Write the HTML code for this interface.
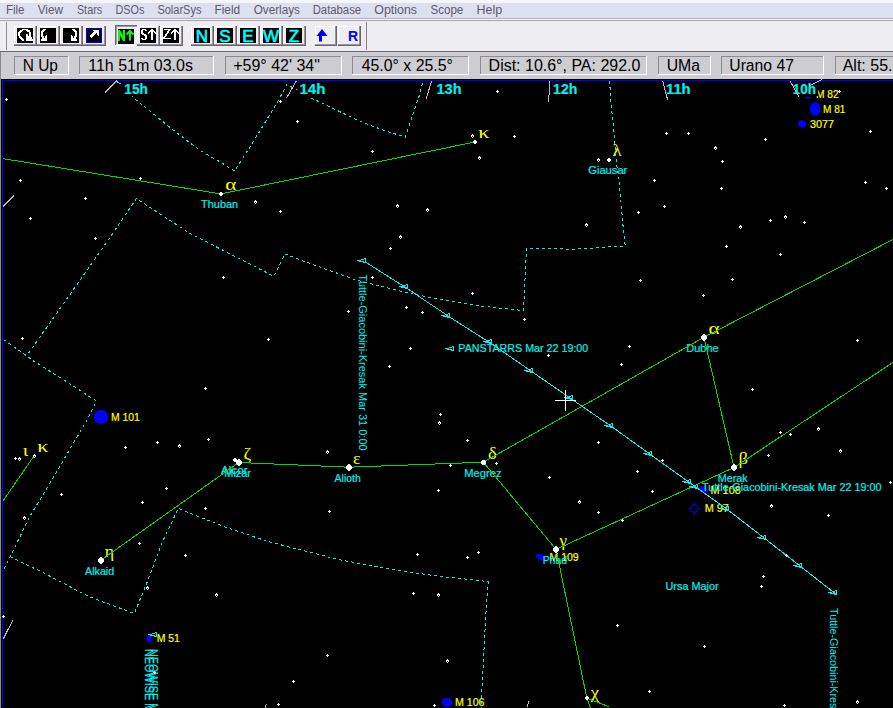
<!DOCTYPE html><html><head><meta charset="utf-8"><style>html,body{margin:0;padding:0;background:#000;overflow:hidden}svg{display:block}</style></head><body><svg width="893" height="708" viewBox="0 0 893 708" font-family="Liberation Sans, sans-serif"><rect x="0" y="0" width="893" height="79" fill="#d0d0d4"/><rect x="0" y="0" width="893" height="3" fill="#f6f6fa"/><rect x="0" y="3" width="893" height="15" fill="#dde0f0"/><rect x="0" y="18" width="893" height="1" fill="#b8acb8"/><rect x="0" y="19" width="893" height="1" fill="#fafafa"/><rect x="0" y="20" width="893" height="1" fill="#a8a0a8"/><rect x="0" y="21" width="893" height="30" fill="#eeeef2"/><rect x="0" y="51" width="893" height="1" fill="#6c646c"/><rect x="0" y="52" width="893" height="27" fill="#cdccd2"/><rect x="0" y="52" width="1" height="27" fill="#8a8a8a"/><text x="5.9" y="13.8" fill="#62586a" font-size="12" textLength="18.6" lengthAdjust="spacingAndGlyphs" >File</text><text x="37.7" y="13.8" fill="#62586a" font-size="12" textLength="25.3" lengthAdjust="spacingAndGlyphs" >View</text><text x="76.9" y="13.8" fill="#62586a" font-size="12" textLength="25.3" lengthAdjust="spacingAndGlyphs" >Stars</text><text x="115.5" y="13.8" fill="#62586a" font-size="12" textLength="28.8" lengthAdjust="spacingAndGlyphs" >DSOs</text><text x="157.4" y="13.8" fill="#62586a" font-size="12" textLength="44.0" lengthAdjust="spacingAndGlyphs" >SolarSys</text><text x="214.5" y="13.8" fill="#62586a" font-size="12" textLength="25.7" lengthAdjust="spacingAndGlyphs" >Field</text><text x="253.7" y="13.8" fill="#62586a" font-size="12" textLength="46.3" lengthAdjust="spacingAndGlyphs" >Overlays</text><text x="312.7" y="13.8" fill="#62586a" font-size="12" textLength="48.4" lengthAdjust="spacingAndGlyphs" >Database</text><text x="374.3" y="13.8" fill="#62586a" font-size="12" textLength="42.7" lengthAdjust="spacingAndGlyphs" >Options</text><text x="430.5" y="13.8" fill="#62586a" font-size="12" textLength="32.8" lengthAdjust="spacingAndGlyphs" >Scope</text><text x="476.6" y="13.8" fill="#62586a" font-size="12" textLength="25.6" lengthAdjust="spacingAndGlyphs" >Help</text><rect x="6" y="22" width="1" height="28" fill="#8a908a"/><rect x="366" y="22" width="1" height="28" fill="#8a808a"/><rect x="14" y="26" width="22" height="1" fill="#ffffff"/><rect x="14" y="26" width="1" height="19" fill="#ffffff"/><rect x="14" y="44" width="22" height="1" fill="#9c949c"/><rect x="35" y="26" width="1" height="19" fill="#9c949c"/><rect x="14" y="45" width="23" height="1" fill="#6c646c"/><rect x="36" y="26" width="1" height="20" fill="#6c646c"/><rect x="17" y="28" width="16" height="15" fill="#000"/><path d="M22 29h6v1h-6zM20 30h3v1h-3zM26 30h4v1h-4zM19 31h3v1h-3zM27 31h3v1h-3zM18 32h3v1h-3zM29 32h2v1h-2zM18 33h2v1h-2zM29 33h2v1h-2zM18 34h2v1h-2zM26 34h2v1h-2zM29 34h2v1h-2zM18 35h2v1h-2zM26 35h2v1h-2zM29 35h2v1h-2zM19 36h2v1h-2zM26 36h5v1h-5zM19 37h3v1h-3zM26 37h6v1h-6zM20 38h3v1h-3zM26 38h6v1h-6zM21 39h3v1h-3zM26 39h7v1h-7zM22 40h2v1h-2zM26 40h7v1h-7z" fill="#fff"/><rect x="37" y="26" width="22" height="1" fill="#ffffff"/><rect x="37" y="26" width="1" height="19" fill="#ffffff"/><rect x="37" y="44" width="22" height="1" fill="#9c949c"/><rect x="58" y="26" width="1" height="19" fill="#9c949c"/><rect x="37" y="45" width="23" height="1" fill="#6c646c"/><rect x="59" y="26" width="1" height="20" fill="#6c646c"/><rect x="40" y="28" width="16" height="15" fill="#000"/><path d="M43 29h3v1h-3zM42 30h3v1h-3zM41 31h3v1h-3zM41 32h2v1h-2zM41 33h2v1h-2zM41 34h2v1h-2zM41 35h2v1h-2zM46 35h1v1h-1zM41 36h3v1h-3zM45 36h2v1h-2zM42 37h2v1h-2zM45 37h2v1h-2zM42 38h5v1h-5zM41 39h6v1h-6zM41 40h6v1h-6z" fill="#fff"/><rect x="60" y="26" width="22" height="1" fill="#ffffff"/><rect x="60" y="26" width="1" height="19" fill="#ffffff"/><rect x="60" y="44" width="22" height="1" fill="#9c949c"/><rect x="81" y="26" width="1" height="19" fill="#9c949c"/><rect x="60" y="45" width="23" height="1" fill="#6c646c"/><rect x="82" y="26" width="1" height="20" fill="#6c646c"/><rect x="63" y="28" width="16" height="15" fill="#000"/><path d="M72 29h3v1h-3zM73 30h3v1h-3zM74 31h3v1h-3zM75 32h2v1h-2zM75 33h2v1h-2zM75 34h2v1h-2zM71 35h1v1h-1zM75 35h2v1h-2zM71 36h2v1h-2zM74 36h3v1h-3zM71 37h2v1h-2zM74 37h2v1h-2zM71 38h5v1h-5zM71 39h6v1h-6zM71 40h6v1h-6z" fill="#fff"/><rect x="83" y="26" width="22" height="1" fill="#ffffff"/><rect x="83" y="26" width="1" height="19" fill="#ffffff"/><rect x="83" y="44" width="22" height="1" fill="#9c949c"/><rect x="104" y="26" width="1" height="19" fill="#9c949c"/><rect x="83" y="45" width="23" height="1" fill="#6c646c"/><rect x="105" y="26" width="1" height="20" fill="#6c646c"/><rect x="86" y="28" width="16" height="15" fill="#000"/><rect x="86.5" y="28.5" width="15" height="14" fill="none" stroke="#0000ff"/><path d="M93 30h6v1h-6zM94 31h5v1h-5zM93 32h6v1h-6zM92 33h4v1h-4zM97 33h2v1h-2zM91 34h4v1h-4zM97 34h2v1h-2zM90 35h4v1h-4zM98 35h1v1h-1zM90 36h3v1h-3zM91 37h1v1h-1z" fill="#fff"/><rect x="115" y="25" width="23" height="1" fill="#6c646c"/><rect x="115" y="25" width="1" height="20" fill="#6c646c"/><rect x="116" y="26" width="21" height="1" fill="#a09aa0"/><rect x="116" y="26" width="1" height="18" fill="#a09aa0"/><rect x="115" y="45" width="23" height="1" fill="#ffffff"/><rect x="137" y="25" width="1" height="21" fill="#ffffff"/><rect x="118" y="29" width="16" height="15" fill="#000"/><g transform="translate(118,29)" fill="#00ff00"><path d="M0 1h2v11h-2zM5 1h2v11h-2zM0 1h2l5 9v2h-2l-5-9z"/><path d="M11 1.5h2v10h-2z"/><path d="M8.5 5.5L12 2L15.5 5.5" stroke="#00ff00" stroke-width="2" fill="none"/></g><rect x="137" y="26" width="22" height="1" fill="#ffffff"/><rect x="137" y="26" width="1" height="19" fill="#ffffff"/><rect x="137" y="44" width="22" height="1" fill="#9c949c"/><rect x="158" y="26" width="1" height="19" fill="#9c949c"/><rect x="137" y="45" width="23" height="1" fill="#6c646c"/><rect x="159" y="26" width="1" height="20" fill="#6c646c"/><rect x="140" y="28" width="16" height="15" fill="#000"/><path fill="#fff" d="M142 29h4v1h-4zM141 30h2v1h-2zM145 30h2v1h-2zM141 31h2v1h-2zM141 32h2v1h-2zM141 33h3v1h-3zM142 34h4v1h-4zM144 35h3v1h-3zM145 36h2v1h-2zM145 37h2v1h-2zM141 38h2v1h-2zM145 38h2v1h-2zM142 39h4v1h-4zM151 29h2v1h-2zM150 30h4v1h-4zM149 31h6v1h-6zM148 32h2v1h-2zM151 32h2v1h-2zM154 32h2v1h-2zM148 33h1v1h-1zM151 33h2v1h-2zM155 33h1v1h-1zM151 34h2v1h-2zM151 35h2v1h-2zM151 36h2v1h-2zM151 37h2v1h-2zM151 38h2v1h-2zM151 39h2v1h-2z"/><rect x="160" y="26" width="22" height="1" fill="#ffffff"/><rect x="160" y="26" width="1" height="19" fill="#ffffff"/><rect x="160" y="44" width="22" height="1" fill="#9c949c"/><rect x="181" y="26" width="1" height="19" fill="#9c949c"/><rect x="160" y="45" width="23" height="1" fill="#6c646c"/><rect x="182" y="26" width="1" height="20" fill="#6c646c"/><rect x="163" y="28" width="16" height="15" fill="#000"/><path fill="#fff" d="M164 29h7v1h-7zM168 30h2v1h-2zM167 31h2v1h-2zM167 32h2v1h-2zM166 33h2v1h-2zM165 34h2v1h-2zM165 35h2v1h-2zM164 36h2v1h-2zM163 37h2v1h-2zM163 38h8v1h-8zM174 29h2v1h-2zM173 30h4v1h-4zM172 31h6v1h-6zM171 32h2v1h-2zM174 32h2v1h-2zM177 32h2v1h-2zM171 33h1v1h-1zM174 33h2v1h-2zM178 33h1v1h-1zM174 34h2v1h-2zM174 35h2v1h-2zM174 36h2v1h-2zM174 37h2v1h-2zM174 38h2v1h-2zM174 39h2v1h-2z"/><rect x="191" y="26" width="22" height="1" fill="#ffffff"/><rect x="191" y="26" width="1" height="19" fill="#ffffff"/><rect x="191" y="44" width="22" height="1" fill="#9c949c"/><rect x="212" y="26" width="1" height="19" fill="#9c949c"/><rect x="191" y="45" width="23" height="1" fill="#6c646c"/><rect x="213" y="26" width="1" height="20" fill="#6c646c"/><rect x="194" y="28" width="16" height="15" fill="#000"/><g transform="translate(194,28)"><text x="8" y="13.5" text-anchor="middle" font-size="17" fill="#00ffff" stroke="#00ffff" stroke-width="0.6">N</text></g><rect x="214" y="26" width="22" height="1" fill="#ffffff"/><rect x="214" y="26" width="1" height="19" fill="#ffffff"/><rect x="214" y="44" width="22" height="1" fill="#9c949c"/><rect x="235" y="26" width="1" height="19" fill="#9c949c"/><rect x="214" y="45" width="23" height="1" fill="#6c646c"/><rect x="236" y="26" width="1" height="20" fill="#6c646c"/><rect x="217" y="28" width="16" height="15" fill="#000"/><g transform="translate(217,28)"><text x="8" y="13.5" text-anchor="middle" font-size="17" fill="#00ffff" stroke="#00ffff" stroke-width="0.6">S</text></g><rect x="237" y="26" width="22" height="1" fill="#ffffff"/><rect x="237" y="26" width="1" height="19" fill="#ffffff"/><rect x="237" y="44" width="22" height="1" fill="#9c949c"/><rect x="258" y="26" width="1" height="19" fill="#9c949c"/><rect x="237" y="45" width="23" height="1" fill="#6c646c"/><rect x="259" y="26" width="1" height="20" fill="#6c646c"/><rect x="240" y="28" width="16" height="15" fill="#000"/><g transform="translate(240,28)"><text x="8" y="13.5" text-anchor="middle" font-size="17" fill="#00ffff" stroke="#00ffff" stroke-width="0.6">E</text></g><rect x="260" y="26" width="22" height="1" fill="#ffffff"/><rect x="260" y="26" width="1" height="19" fill="#ffffff"/><rect x="260" y="44" width="22" height="1" fill="#9c949c"/><rect x="281" y="26" width="1" height="19" fill="#9c949c"/><rect x="260" y="45" width="23" height="1" fill="#6c646c"/><rect x="282" y="26" width="1" height="20" fill="#6c646c"/><rect x="263" y="28" width="16" height="15" fill="#000"/><g transform="translate(263,28)"><text x="8" y="13.5" text-anchor="middle" font-size="17" fill="#00ffff" stroke="#00ffff" stroke-width="0.6">W</text></g><rect x="283" y="26" width="22" height="1" fill="#ffffff"/><rect x="283" y="26" width="1" height="19" fill="#ffffff"/><rect x="283" y="44" width="22" height="1" fill="#9c949c"/><rect x="304" y="26" width="1" height="19" fill="#9c949c"/><rect x="283" y="45" width="23" height="1" fill="#6c646c"/><rect x="305" y="26" width="1" height="20" fill="#6c646c"/><rect x="286" y="28" width="16" height="15" fill="#000"/><g transform="translate(286,28)"><text x="8" y="13.5" text-anchor="middle" font-size="17" fill="#00ffff" stroke="#00ffff" stroke-width="0.6">Z</text></g><rect x="315" y="26" width="21" height="1" fill="#fff"/><rect x="315" y="26" width="1" height="19" fill="#fff"/><rect x="315" y="44" width="21" height="1" fill="#9c949c"/><rect x="335" y="26" width="1" height="19" fill="#9c949c"/><rect x="315" y="45" width="22" height="1" fill="#6c646c"/><rect x="336" y="26" width="1" height="20" fill="#6c646c"/><rect x="338" y="26" width="22" height="1" fill="#fff"/><rect x="338" y="26" width="1" height="19" fill="#fff"/><rect x="338" y="44" width="22" height="1" fill="#9c949c"/><rect x="359" y="26" width="1" height="19" fill="#9c949c"/><rect x="338" y="45" width="23" height="1" fill="#6c646c"/><rect x="360" y="26" width="1" height="20" fill="#6c646c"/><path d="M320.5 41.5V35" stroke="#0000ff" stroke-width="3"/><path d="M316.5 36l5.5-7l5.5 7z" fill="#0000ff"/><text x="348" y="41" font-size="14" font-weight="bold" fill="#0000ff">R</text><rect x="14" y="56" width="55" height="1" fill="#8c8c8c"/><rect x="14" y="56" width="1" height="19" fill="#8c8c8c"/><rect x="14" y="74" width="55" height="1" fill="#ffffff"/><rect x="68" y="56" width="1" height="19" fill="#ffffff"/><text x="22.7" y="70.6" fill="#000" font-size="16" textLength="35.2" lengthAdjust="spacingAndGlyphs" >N Up</text><rect x="79" y="56" width="135" height="1" fill="#8c8c8c"/><rect x="79" y="56" width="1" height="19" fill="#8c8c8c"/><rect x="79" y="74" width="135" height="1" fill="#ffffff"/><rect x="213" y="56" width="1" height="19" fill="#ffffff"/><text x="88.2" y="70.6" fill="#000" font-size="16" textLength="104.8" lengthAdjust="spacingAndGlyphs" >11h 51m 03.0s</text><rect x="225" y="56" width="117" height="1" fill="#8c8c8c"/><rect x="225" y="56" width="1" height="19" fill="#8c8c8c"/><rect x="225" y="74" width="117" height="1" fill="#ffffff"/><rect x="341" y="56" width="1" height="19" fill="#ffffff"/><text x="233.2" y="70.6" fill="#000" font-size="16" textLength="86.7" lengthAdjust="spacingAndGlyphs" >+59° 42' 34&quot;</text><rect x="352" y="56" width="117" height="1" fill="#8c8c8c"/><rect x="352" y="56" width="1" height="19" fill="#8c8c8c"/><rect x="352" y="74" width="117" height="1" fill="#ffffff"/><rect x="468" y="56" width="1" height="19" fill="#ffffff"/><text x="361.7" y="70.6" fill="#000" font-size="16" textLength="91.2" lengthAdjust="spacingAndGlyphs" >45.0° x 25.5°</text><rect x="480" y="56" width="167" height="1" fill="#8c8c8c"/><rect x="480" y="56" width="1" height="19" fill="#8c8c8c"/><rect x="480" y="74" width="167" height="1" fill="#ffffff"/><rect x="646" y="56" width="1" height="19" fill="#ffffff"/><text x="488.6" y="70.6" fill="#000" font-size="16" textLength="151.8" lengthAdjust="spacingAndGlyphs" >Dist: 10.6°, PA: 292.0</text><rect x="658" y="56" width="53" height="1" fill="#8c8c8c"/><rect x="658" y="56" width="1" height="19" fill="#8c8c8c"/><rect x="658" y="74" width="53" height="1" fill="#ffffff"/><rect x="710" y="56" width="1" height="19" fill="#ffffff"/><text x="666.7" y="70.6" fill="#000" font-size="16" textLength="33.3" lengthAdjust="spacingAndGlyphs" >UMa</text><rect x="721" y="56" width="103" height="1" fill="#8c8c8c"/><rect x="721" y="56" width="1" height="19" fill="#8c8c8c"/><rect x="721" y="74" width="103" height="1" fill="#ffffff"/><rect x="823" y="56" width="1" height="19" fill="#ffffff"/><text x="729.3" y="70.6" fill="#000" font-size="16" textLength="64.6" lengthAdjust="spacingAndGlyphs" >Urano 47</text><rect x="835" y="56" width="126" height="1" fill="#8c8c8c"/><rect x="835" y="56" width="1" height="19" fill="#8c8c8c"/><rect x="835" y="74" width="126" height="1" fill="#ffffff"/><rect x="960" y="56" width="1" height="19" fill="#ffffff"/><text x="842.7" y="70.6" fill="#000" font-size="16" >Alt: 55.5°</text><rect x="1" y="79" width="892" height="629" fill="#000"/><rect x="0" y="79" width="1" height="629" fill="#8c8c8c"/><rect x="2" y="80" width="891" height="1" fill="#0000ff"/><rect x="2" y="80" width="1" height="627" fill="#0000ff"/><ellipse cx="815" cy="108.9" rx="5.2" ry="7" fill="#0000ff"/><ellipse cx="802" cy="123.9" rx="4.2" ry="3.5" fill="#0000ff" transform="rotate(30 802 123.9)"/><rect x="805" y="97" width="6" height="1.2" fill="#0000ff"/><circle cx="101.1" cy="416.9" r="7.2" fill="#0000ff"/><ellipse cx="703" cy="489.7" rx="5" ry="3" fill="#0000ff" transform="rotate(25 703 489.7)"/><circle cx="694.5" cy="508.5" r="3.8" stroke="#0000ff" fill="none"/><path d="M688 508.5h3M698 508.5h3M694.5 502v3M694.5 512v3" stroke="#0000ff"/><ellipse cx="540.7" cy="557" rx="5" ry="2.8" fill="#0000ff" transform="rotate(25 540.7 557)"/><ellipse cx="149" cy="639" rx="2.8" ry="3.5" fill="#0000ff"/><ellipse cx="447" cy="702.3" rx="5.2" ry="4.6" fill="#0000ff"/><text x="815.9" y="98.0" fill="#ffff00" font-size="11" textLength="22.8" lengthAdjust="spacingAndGlyphs" stroke="#ffff00" stroke-width="0.2" >M 82</text><text x="823.1" y="113.0" fill="#ffff00" font-size="11" textLength="22.3" lengthAdjust="spacingAndGlyphs" stroke="#ffff00" stroke-width="0.2" >M 81</text><text x="810.0" y="127.7" fill="#ffff00" font-size="11" textLength="24.0" lengthAdjust="spacingAndGlyphs" stroke="#ffff00" stroke-width="0.2" >3077</text><text x="110.9" y="421.0" fill="#ffff00" font-size="11" textLength="28.8" lengthAdjust="spacingAndGlyphs" stroke="#ffff00" stroke-width="0.2" >M 101</text><text x="710.6" y="493.5" fill="#ffff00" font-size="11" textLength="30.1" lengthAdjust="spacingAndGlyphs" stroke="#ffff00" stroke-width="0.2" >M 108</text><text x="704.8" y="511.9" fill="#ffff00" font-size="11" textLength="24.1" lengthAdjust="spacingAndGlyphs" stroke="#ffff00" stroke-width="0.2" >M 97</text><text x="549.5" y="560.9" fill="#ffff00" font-size="11" textLength="29.2" lengthAdjust="spacingAndGlyphs" stroke="#ffff00" stroke-width="0.2" >M 109</text><text x="156.7" y="642.1" fill="#ffff00" font-size="11" textLength="23.2" lengthAdjust="spacingAndGlyphs" stroke="#ffff00" stroke-width="0.2" >M 51</text><text x="454.9" y="706.3" fill="#ffff00" font-size="11" textLength="29.6" lengthAdjust="spacingAndGlyphs" stroke="#ffff00" stroke-width="0.2" >M 106</text><text x="201.1" y="208.0" fill="#00f0f0" font-size="11" textLength="37.0" lengthAdjust="spacingAndGlyphs" stroke="#00f0f0" stroke-width="0.2" >Thuban</text><text x="686.3" y="351.9" fill="#00f0f0" font-size="11" textLength="32.4" lengthAdjust="spacingAndGlyphs" stroke="#00f0f0" stroke-width="0.2" >Dubhe</text><text x="464.3" y="476.5" fill="#00f0f0" font-size="11" textLength="37.3" lengthAdjust="spacingAndGlyphs" stroke="#00f0f0" stroke-width="0.2" >Megrez</text><text x="334.6" y="481.6" fill="#00f0f0" font-size="11" textLength="26.2" lengthAdjust="spacingAndGlyphs" stroke="#00f0f0" stroke-width="0.2" >Alioth</text><text x="717.7" y="481.8" fill="#00f0f0" font-size="11" textLength="30.0" lengthAdjust="spacingAndGlyphs" stroke="#00f0f0" stroke-width="0.2" >Merak</text><text x="85.0" y="574.5" fill="#00f0f0" font-size="11" textLength="29.2" lengthAdjust="spacingAndGlyphs" stroke="#00f0f0" stroke-width="0.2" >Alkaid</text><text x="588.3" y="173.7" fill="#00f0f0" font-size="11" textLength="39.0" lengthAdjust="spacingAndGlyphs" stroke="#00f0f0" stroke-width="0.2" >Giausar</text><text x="665.5" y="589.7" fill="#00f0f0" font-size="11" textLength="53.2" lengthAdjust="spacingAndGlyphs" stroke="#00f0f0" stroke-width="0.2" >Ursa Major</text><text x="458.3" y="352.0" fill="#00f0f0" font-size="11" textLength="130.0" lengthAdjust="spacingAndGlyphs" stroke="#00f0f0" stroke-width="0.2" >PANSTARRS Mar 22 19:00</text><text x="702.0" y="490.8" fill="#00f0f0" font-size="11" textLength="179.6" lengthAdjust="spacingAndGlyphs" stroke="#00f0f0" stroke-width="0.2" >Tuttle-Giacobini-Kresak Mar 22 19:00</text><text x="221.0" y="474.3" fill="#00f0f0" font-size="11" textLength="26.6" lengthAdjust="spacingAndGlyphs" stroke="#00f0f0" stroke-width="0.2" >Alcor</text><text x="224.3" y="476.6" fill="#00f0f0" font-size="11" textLength="26.7" lengthAdjust="spacingAndGlyphs" stroke="#00f0f0" stroke-width="0.2" >Mizar</text><text x="542.7" y="563.6" fill="#00f0f0" font-size="11" textLength="24.3" lengthAdjust="spacingAndGlyphs" stroke="#00f0f0" stroke-width="0.2" >Phad</text><text x="0" y="0" fill="#ffff00" font-size="17" font-family="Liberation Serif" transform="translate(225.2 190.0) scale(1.25 1)">α</text><text x="0" y="0" fill="#ffff00" font-size="17" font-family="Liberation Serif" transform="translate(708.4 333.8) scale(1.25 1)">α</text><text x="0" y="0" fill="#ffff00" font-size="17" font-family="Liberation Serif" transform="translate(478.3 137.9) scale(1.30 1)">κ</text><text x="0" y="0" fill="#ffff00" font-size="17" font-family="Liberation Serif" transform="translate(612.5 155.9) scale(1.10 1)">λ</text><text x="0" y="0" fill="#ffff00" font-size="17" font-family="Liberation Serif" transform="translate(738.6 464.0) scale(1.10 1)">β</text><text x="0" y="0" fill="#ffff00" font-size="17" font-family="Liberation Serif" transform="translate(488.1 458.9) scale(1.10 1)">δ</text><text x="0" y="0" fill="#ffff00" font-size="17" font-family="Liberation Serif" transform="translate(353.1 463.8) scale(1.05 1)">ε</text><text x="0" y="0" fill="#ffff00" font-size="17" font-family="Liberation Serif" transform="translate(243.4 459.0) scale(1.10 1)">ζ</text><text x="0" y="0" fill="#ffff00" font-size="17" font-family="Liberation Serif" transform="translate(104.8 556.9) scale(1.05 1)">η</text><text x="0" y="0" fill="#ffff00" font-size="17" font-family="Liberation Serif" transform="translate(559.4 546.0) scale(1.00 1)">γ</text><text x="0" y="0" fill="#ffff00" font-size="17" font-family="Liberation Serif" transform="translate(590.8 698.0) scale(1.10 1)">χ</text><text x="0" y="0" fill="#ffff00" font-size="17" font-family="Liberation Serif" transform="translate(22.7 456.0) scale(1.20 1)">ι</text><text x="0" y="0" fill="#ffff00" font-size="17" font-family="Liberation Serif" transform="translate(37.3 452.1) scale(1.30 1)">κ</text><text x="0" y="0" fill="#00f0f0" font-size="11" transform="translate(358.6 274.6) rotate(90)" textLength="176.0" lengthAdjust="spacingAndGlyphs">Tuttle-Giacobini-Kresak Mar 31 0:00</text><text x="0" y="0" fill="#00f0f0" font-size="11" transform="translate(829.6 608.0) rotate(90)" textLength="178.0" lengthAdjust="spacingAndGlyphs">Tuttle-Giacobini-Kresak Mar 22 19:00</text><text x="0" y="0" fill="#00f0f0" font-size="13" stroke="#00f0f0" stroke-width="0.15" transform="translate(145 649) rotate(90)" textLength="118" lengthAdjust="spacingAndGlyphs">NEOWISE Mar 22 19:00</text><text x="0" y="0" fill="#00f0f0" font-size="13" stroke="#00f0f0" stroke-width="0.15" transform="translate(148.5 649) rotate(90)" textLength="118" lengthAdjust="spacingAndGlyphs">NEOWISE Mar 22 19:00</text><g shape-rendering="crispEdges"><polyline points="118.0,82.0 122.4,85.8 134.0,98.2 172.6,129.5 200.2,150.6 220.6,162.2 234.5,171.0 250.4,146.4 266.0,121.0 279.4,98.4 286.4,85.6 288.5,81.0" stroke="#00f0f0" fill="none" stroke-dasharray="3 3"/><polyline points="290.0,86.4 298.4,89.9 310.5,97.7 322.5,103.3 357.6,120.3 381.8,129.7 405.3,137.1 409.4,124.4 415.4,106.9 420.1,93.4 422.8,81.0" stroke="#00f0f0" fill="none" stroke-dasharray="3 3"/><polyline points="609.6,81.0 610.8,100.3 614.6,139.7 617.2,169.0 618.9,177.7 621.0,202.4 623.1,226.4 625.2,245.9 575.0,249.2 526.5,248.4 525.0,279.3 523.5,310.6 495.9,307.7 471.1,304.8 414.2,294.4 356.5,280.2 300.7,260.1 284.8,253.9 274.0,276.4 190.0,233.4 136.4,198.6 111.3,235.5 69.0,295.8 26.7,355.8" stroke="#00f0f0" fill="none" stroke-dasharray="3 3"/><polyline points="3.7,339.6 26.7,355.8 33.1,360.7 69.8,383.7 96.5,401.2 87.0,420.0 52.0,479.9 29.4,517.2 10.2,556.7 3.4,570.3" stroke="#00f0f0" fill="none" stroke-dasharray="3 3"/><polyline points="10.2,556.7 40.0,571.1 89.4,596.8 134.3,613.5 146.8,583.0 162.6,541.4 178.4,508.2 182.7,510.2 225.0,527.0 267.8,541.5 337.7,559.4 387.0,568.7 435.4,575.8 488.2,581.6 487.3,592.0 485.5,620.0 481.0,708.0" stroke="#00f0f0" fill="none" stroke-dasharray="3 3"/><polyline points="2.7,158.6 221.0,193.9 475.0,142.0" stroke="#00dc00" fill="none" /><polyline points="34.0,456.0 2.7,501.4" stroke="#00dc00" fill="none" /><polyline points="483.4,462.2 704.0,337.2 893.0,239.5" stroke="#00dc00" fill="none" /><polyline points="704.0,337.2 734.0,467.5" stroke="#00dc00" fill="none" /><polyline points="556.1,549.4 734.0,467.5 893.0,362.4" stroke="#00dc00" fill="none" /><polyline points="483.4,462.2 556.1,549.4 586.8,698.0 608.6,706.6" stroke="#00dc00" fill="none" /><polyline points="586.8,698.0 590.4,708.0" stroke="#00dc00" fill="none" /><polyline points="238.8,462.5 348.8,467.2 483.4,462.2" stroke="#00dc00" fill="none" /><polyline points="238.8,462.5 100.9,560.2" stroke="#00dc00" fill="none" /><polyline points="365.7,262.2 407.5,288.7 449.9,317.2 491.9,343.9 532.5,372.1 572.7,399.8 612.8,427.4 651.9,455.6 690.9,483.5 728.8,510.6 765.8,539.3 801.6,567.2 836.6,594.7" stroke="#00f0f0" fill="none" /><path d="M357.5 260.5h2L365.5 258.5V262.5Z" stroke="#00f0f0" fill="none"/><path d="M399.5 286.5h2L407.5 284.5V288.5Z" stroke="#00f0f0" fill="none"/><path d="M441.5 315.5h2L449.5 313.5V317.5Z" stroke="#00f0f0" fill="none"/><path d="M483.5 341.5h2L491.5 339.5V343.5Z" stroke="#00f0f0" fill="none"/><path d="M524.5 370.5h2L532.5 368.5V372.5Z" stroke="#00f0f0" fill="none"/><path d="M564.5 397.5h2L572.5 395.5V399.5Z" stroke="#00f0f0" fill="none"/><path d="M604.5 425.5h2L612.5 423.5V427.5Z" stroke="#00f0f0" fill="none"/><path d="M643.5 453.5h2L651.5 451.5V455.5Z" stroke="#00f0f0" fill="none"/><path d="M682.5 481.5h2L690.5 479.5V483.5Z" stroke="#00f0f0" fill="none"/><path d="M720.5 508.5h2L728.5 506.5V510.5Z" stroke="#00f0f0" fill="none"/><path d="M757.5 537.5h2L765.5 535.5V539.5Z" stroke="#00f0f0" fill="none"/><path d="M793.5 565.5h2L801.5 563.5V567.5Z" stroke="#00f0f0" fill="none"/><path d="M828.5 592.5h2L836.5 590.5V594.5Z" stroke="#00f0f0" fill="none"/><path d="M445.5 348.5h2L453.5 346.5V350.5Z" stroke="#00f0f0" fill="none"/><path d="M689.5 486.5h2L697.5 484.5V488.5Z" stroke="#00f0f0" fill="none"/><path d="M148.5 634.5h2L156.5 632.5V636.5Z" stroke="#00f0f0" fill="none"/></g><rect x="122.2" y="82" width="27.89999999999999" height="14" fill="#000"/><text x="124.3" y="94.0" fill="#00f0f0" font-size="14" textLength="23.7" lengthAdjust="spacingAndGlyphs" stroke="#00f0f0" stroke-width="0.2" font-weight="bold">15h</text><rect x="297.4" y="82" width="30.100000000000023" height="14" fill="#000"/><text x="299.5" y="94.0" fill="#00f0f0" font-size="14" textLength="25.9" lengthAdjust="spacingAndGlyphs" stroke="#00f0f0" stroke-width="0.2" font-weight="bold">14h</text><rect x="434.4" y="82" width="29.200000000000045" height="14" fill="#000"/><text x="436.5" y="94.0" fill="#00f0f0" font-size="14" textLength="25.0" lengthAdjust="spacingAndGlyphs" stroke="#00f0f0" stroke-width="0.2" font-weight="bold">13h</text><rect x="551" y="82" width="28.5" height="14" fill="#000"/><text x="553.1" y="94.0" fill="#00f0f0" font-size="14" textLength="24.3" lengthAdjust="spacingAndGlyphs" stroke="#00f0f0" stroke-width="0.2" font-weight="bold">12h</text><rect x="663.9" y="82" width="28.800000000000068" height="14" fill="#000"/><text x="666.0" y="94.0" fill="#00f0f0" font-size="14" textLength="24.6" lengthAdjust="spacingAndGlyphs" stroke="#00f0f0" stroke-width="0.2" font-weight="bold">11h</text><rect x="790.7" y="82" width="27.399999999999977" height="14" fill="#000"/><text x="792.8" y="94.0" fill="#00f0f0" font-size="14" textLength="23.2" lengthAdjust="spacingAndGlyphs" stroke="#00f0f0" stroke-width="0.2" font-weight="bold">10h</text><g shape-rendering="crispEdges"><polyline points="105.2,92.5 116.6,81.1 118.5,83.5" stroke="#c4b4c4" fill="none" /><polyline points="3.1,206.5 13.8,195.5" stroke="#c4b4c4" fill="none" /><polyline points="286.4,98.4 296.3,81.0" stroke="#c4b4c4" fill="none" /><polyline points="426.2,98.8 431.6,81.0" stroke="#c4b4c4" fill="none" /><polyline points="548.6,102.5 549.8,81.0" stroke="#c4b4c4" fill="none" /><polyline points="662.9,81.4 667.6,99.8" stroke="#c4b4c4" fill="none" /><polyline points="790.1,81.0 798.8,96.8" stroke="#c4b4c4" fill="none" /><polyline points="808.7,86.1 822.2,79.4" stroke="#c4b4c4" fill="none" /><polyline points="3.4,638.7 12.8,620.2" stroke="#c4b4c4" fill="none" /><polyline points="265.0,707.5 266.8,703.8" stroke="#c4b4c4" fill="none" /><polyline points="527.5,707.5 528.6,701.0" stroke="#c4b4c4" fill="none" /></g><path fill="#fff" d="M6 98h1v1h-1zM5 99h3v1h-3zM6 100h1v1h-1zM20 179h1v1h-1zM19 180h3v1h-3zM20 181h1v1h-1zM85 197h1v1h-1zM84 198h3v1h-3zM85 199h1v1h-1zM30 217h1v1h-1zM29 218h3v1h-3zM30 219h1v1h-1zM140 177h1v1h-1zM139 178h3v1h-3zM140 179h1v1h-1zM280 100h1v1h-1zM279 101h3v1h-3zM280 102h1v1h-1zM297 120h1v1h-1zM296 121h3v1h-3zM297 122h1v1h-1zM280 210h1v1h-1zM279 211h3v1h-3zM280 212h1v1h-1zM95 237h1v1h-1zM94 238h3v1h-3zM95 239h1v1h-1zM372 150h1v1h-1zM371 151h3v1h-3zM372 152h1v1h-1zM497 90h1v1h-1zM496 91h3v1h-3zM497 92h1v1h-1zM514 135h1v1h-1zM513 136h3v1h-3zM514 137h1v1h-1zM666 132h1v1h-1zM665 133h3v1h-3zM666 134h1v1h-1zM688 132h1v1h-1zM687 133h3v1h-3zM688 134h1v1h-1zM765 138h1v1h-1zM764 139h3v1h-3zM765 140h1v1h-1zM870 130h1v1h-1zM869 131h3v1h-3zM870 132h1v1h-1zM722 160h1v1h-1zM721 161h3v1h-3zM722 162h1v1h-1zM654 179h1v1h-1zM653 180h3v1h-3zM654 181h1v1h-1zM721 187h1v1h-1zM720 188h3v1h-3zM721 189h1v1h-1zM865 181h1v1h-1zM864 182h3v1h-3zM865 183h1v1h-1zM886 187h1v1h-1zM885 188h3v1h-3zM886 189h1v1h-1zM638 211h1v1h-1zM637 212h3v1h-3zM638 213h1v1h-1zM664 205h1v1h-1zM663 206h3v1h-3zM664 207h1v1h-1zM770 219h1v1h-1zM769 220h3v1h-3zM770 221h1v1h-1zM804 221h1v1h-1zM803 222h3v1h-3zM804 223h1v1h-1zM839 90h1v1h-1zM838 91h3v1h-3zM839 92h1v1h-1zM223 276h1v1h-1zM222 277h3v1h-3zM223 278h1v1h-1zM22 337h1v1h-1zM21 338h3v1h-3zM22 339h1v1h-1zM268 338h1v1h-1zM267 339h3v1h-3zM268 340h1v1h-1zM205 387h1v1h-1zM204 388h3v1h-3zM205 389h1v1h-1zM390 247h1v1h-1zM389 248h3v1h-3zM390 249h1v1h-1zM372 276h1v1h-1zM371 277h3v1h-3zM372 278h1v1h-1zM472 292h1v1h-1zM471 293h3v1h-3zM472 294h1v1h-1zM348 310h1v1h-1zM347 311h3v1h-3zM348 312h1v1h-1zM406 306h1v1h-1zM405 307h3v1h-3zM406 308h1v1h-1zM422 311h1v1h-1zM421 312h3v1h-3zM422 313h1v1h-1zM524 318h1v1h-1zM523 319h3v1h-3zM524 320h1v1h-1zM410 347h1v1h-1zM409 348h3v1h-3zM410 349h1v1h-1zM389 365h1v1h-1zM388 366h3v1h-3zM389 367h1v1h-1zM548 354h1v1h-1zM547 355h3v1h-3zM548 356h1v1h-1zM726 245h1v1h-1zM725 246h3v1h-3zM726 247h1v1h-1zM780 253h1v1h-1zM779 254h3v1h-3zM780 255h1v1h-1zM640 279h1v1h-1zM639 280h3v1h-3zM640 281h1v1h-1zM732 278h1v1h-1zM731 279h3v1h-3zM732 280h1v1h-1zM703 294h1v1h-1zM702 295h3v1h-3zM703 296h1v1h-1zM629 345h1v1h-1zM628 346h3v1h-3zM629 347h1v1h-1zM621 363h1v1h-1zM620 364h3v1h-3zM621 365h1v1h-1zM857 339h1v1h-1zM856 340h3v1h-3zM857 341h1v1h-1zM752 388h1v1h-1zM751 389h3v1h-3zM752 390h1v1h-1zM125 446h1v1h-1zM124 447h3v1h-3zM125 448h1v1h-1zM157 441h1v1h-1zM156 442h3v1h-3zM157 443h1v1h-1zM208 438h1v1h-1zM207 439h3v1h-3zM208 440h1v1h-1zM61 493h1v1h-1zM60 494h3v1h-3zM61 495h1v1h-1zM166 487h1v1h-1zM165 488h3v1h-3zM166 489h1v1h-1zM142 501h1v1h-1zM141 502h3v1h-3zM142 503h1v1h-1zM205 507h1v1h-1zM204 508h3v1h-3zM205 509h1v1h-1zM139 542h1v1h-1zM138 543h3v1h-3zM139 544h1v1h-1zM185 554h1v1h-1zM184 555h3v1h-3zM185 556h1v1h-1zM15 457h1v1h-1zM14 458h3v1h-3zM15 459h1v1h-1zM440 413h1v1h-1zM439 414h3v1h-3zM440 415h1v1h-1zM467 439h1v1h-1zM466 440h3v1h-3zM467 441h1v1h-1zM450 464h1v1h-1zM449 465h3v1h-3zM450 466h1v1h-1zM496 462h1v1h-1zM495 463h3v1h-3zM496 464h1v1h-1zM549 476h1v1h-1zM548 477h3v1h-3zM549 478h1v1h-1zM438 489h1v1h-1zM437 490h3v1h-3zM438 491h1v1h-1zM329 510h1v1h-1zM328 511h3v1h-3zM329 512h1v1h-1zM417 553h1v1h-1zM416 554h3v1h-3zM417 555h1v1h-1zM467 556h1v1h-1zM466 557h3v1h-3zM467 558h1v1h-1zM478 551h1v1h-1zM477 552h3v1h-3zM478 553h1v1h-1zM598 441h1v1h-1zM597 442h3v1h-3zM598 443h1v1h-1zM662 459h1v1h-1zM661 460h3v1h-3zM662 461h1v1h-1zM637 470h1v1h-1zM636 471h3v1h-3zM637 472h1v1h-1zM652 490h1v1h-1zM651 491h3v1h-3zM652 492h1v1h-1zM598 511h1v1h-1zM597 512h3v1h-3zM598 513h1v1h-1zM622 519h1v1h-1zM621 520h3v1h-3zM622 521h1v1h-1zM780 431h1v1h-1zM779 432h3v1h-3zM780 433h1v1h-1zM790 433h1v1h-1zM789 434h3v1h-3zM790 435h1v1h-1zM768 454h1v1h-1zM767 455h3v1h-3zM768 456h1v1h-1zM890 481h1v1h-1zM889 482h3v1h-3zM890 483h1v1h-1zM828 514h1v1h-1zM827 515h3v1h-3zM828 516h1v1h-1zM786 554h1v1h-1zM785 555h3v1h-3zM786 556h1v1h-1zM293 680h1v1h-1zM292 681h3v1h-3zM293 682h1v1h-1zM278 703h1v1h-1zM277 704h3v1h-3zM278 705h1v1h-1zM154 671h1v1h-1zM153 672h3v1h-3zM154 673h1v1h-1zM3 615h1v1h-1zM2 616h3v1h-3zM3 617h1v1h-1zM413 592h1v1h-1zM412 593h3v1h-3zM413 594h1v1h-1zM327 654h1v1h-1zM326 655h3v1h-3zM327 656h1v1h-1zM434 704h1v1h-1zM433 705h3v1h-3zM434 706h1v1h-1zM763 575h1v1h-1zM762 576h3v1h-3zM763 577h1v1h-1zM761 585h1v1h-1zM760 586h3v1h-3zM761 587h1v1h-1zM617 624h1v1h-1zM616 625h3v1h-3zM617 626h1v1h-1zM704 645h1v1h-1zM703 646h3v1h-3zM704 647h1v1h-1zM649 690h1v1h-1zM648 691h3v1h-3zM649 692h1v1h-1zM784 704h1v1h-1zM783 705h3v1h-3zM784 706h1v1h-1zM255 200h1v1h-1zM254 201h3v1h-3zM254 202h1v1h-1zM256 202h1v1h-1zM255 203h1v1h-1zM327 450h1v1h-1zM326 451h3v1h-3zM326 452h1v1h-1zM328 452h1v1h-1zM327 453h1v1h-1zM472 134h1v1h-1zM471 135h3v1h-3zM471 136h1v1h-1zM473 136h1v1h-1zM472 137h1v1h-1zM479 156h1v1h-1zM478 157h3v1h-3zM478 158h1v1h-1zM480 158h1v1h-1zM479 159h1v1h-1zM397 204h1v1h-1zM396 205h3v1h-3zM396 206h1v1h-1zM398 206h1v1h-1zM397 207h1v1h-1zM427 208h1v1h-1zM426 209h3v1h-3zM426 210h1v1h-1zM428 210h1v1h-1zM427 211h1v1h-1zM400 235h1v1h-1zM399 236h3v1h-3zM399 237h1v1h-1zM401 237h1v1h-1zM400 238h1v1h-1zM586 223h1v1h-1zM585 224h3v1h-3zM585 225h1v1h-1zM587 225h1v1h-1zM586 226h1v1h-1zM715 146h1v1h-1zM714 147h3v1h-3zM714 148h1v1h-1zM716 148h1v1h-1zM715 149h1v1h-1zM740 225h1v1h-1zM739 226h3v1h-3zM739 227h1v1h-1zM741 227h1v1h-1zM740 228h1v1h-1zM785 215h1v1h-1zM784 216h3v1h-3zM784 217h1v1h-1zM786 217h1v1h-1zM785 218h1v1h-1zM598 158h1v1h-1zM597 159h3v1h-3zM597 160h1v1h-1zM599 160h1v1h-1zM598 161h1v1h-1zM179 444h1v1h-1zM178 445h3v1h-3zM178 446h1v1h-1zM180 446h1v1h-1zM179 447h1v1h-1zM24 516h1v1h-1zM23 517h3v1h-3zM23 518h1v1h-1zM25 518h1v1h-1zM24 519h1v1h-1zM19 457h1v1h-1zM18 458h3v1h-3zM18 459h1v1h-1zM20 459h1v1h-1zM19 460h1v1h-1zM34 454h1v1h-1zM33 455h3v1h-3zM33 456h1v1h-1zM35 456h1v1h-1zM34 457h1v1h-1zM439 421h1v1h-1zM438 422h3v1h-3zM438 423h1v1h-1zM440 423h1v1h-1zM439 424h1v1h-1zM579 500h1v1h-1zM578 501h3v1h-3zM578 502h1v1h-1zM580 502h1v1h-1zM579 503h1v1h-1zM818 427h1v1h-1zM817 428h3v1h-3zM817 429h1v1h-1zM819 429h1v1h-1zM818 430h1v1h-1zM840 449h1v1h-1zM839 450h3v1h-3zM839 451h1v1h-1zM841 451h1v1h-1zM840 452h1v1h-1zM771 504h1v1h-1zM770 505h3v1h-3zM770 506h1v1h-1zM772 506h1v1h-1zM771 507h1v1h-1zM147 586h1v1h-1zM146 587h3v1h-3zM146 588h1v1h-1zM148 588h1v1h-1zM147 589h1v1h-1zM216 593h1v1h-1zM215 594h3v1h-3zM215 595h1v1h-1zM217 595h1v1h-1zM216 596h1v1h-1zM438 593h1v1h-1zM437 594h3v1h-3zM437 595h1v1h-1zM439 595h1v1h-1zM438 596h1v1h-1zM447 659h1v1h-1zM446 660h3v1h-3zM446 661h1v1h-1zM448 661h1v1h-1zM447 662h1v1h-1zM857 700h1v1h-1zM856 701h3v1h-3zM856 702h1v1h-1zM858 702h1v1h-1zM857 703h1v1h-1zM703 334h2v1h-2zM702 335h4v1h-4zM701 336h6v1h-6zM701 337h6v1h-6zM701 338h6v1h-6zM702 339h4v1h-4zM703 340h2v1h-2zM733 464h2v1h-2zM732 465h4v1h-4zM731 466h6v1h-6zM731 467h6v1h-6zM731 468h6v1h-6zM732 469h4v1h-4zM733 470h2v1h-2zM348 464h2v1h-2zM347 465h4v1h-4zM346 466h6v1h-6zM346 467h6v1h-6zM346 468h6v1h-6zM347 469h4v1h-4zM348 470h2v1h-2zM100 557h2v1h-2zM99 558h4v1h-4zM98 559h6v1h-6zM98 560h6v1h-6zM98 561h6v1h-6zM99 562h4v1h-4zM100 563h2v1h-2zM555 546h2v1h-2zM554 547h4v1h-4zM553 548h6v1h-6zM553 549h6v1h-6zM553 550h6v1h-6zM554 551h4v1h-4zM555 552h2v1h-2zM238 459h2v1h-2zM237 460h4v1h-4zM236 461h6v1h-6zM236 462h6v1h-6zM236 463h6v1h-6zM237 464h4v1h-4zM238 465h2v1h-2zM482 460h3v1h-3zM481 461h5v1h-5zM481 462h5v1h-5zM481 463h5v1h-5zM482 464h3v1h-3zM220 192h2v1h-2zM219 193h4v1h-4zM219 194h4v1h-4zM220 195h2v1h-2zM234 458h2v1h-2zM233 459h4v1h-4zM233 460h4v1h-4zM234 461h2v1h-2zM474 140h2v1h-2zM473 141h4v1h-4zM473 142h4v1h-4zM474 143h2v1h-2zM608 158h2v1h-2zM607 159h4v1h-4zM607 160h4v1h-4zM608 161h2v1h-2zM586 696h2v1h-2zM585 697h4v1h-4zM585 698h4v1h-4zM586 699h2v1h-2z"/><path d="M555 400.5h21M565.5 390v21" stroke="#fff" shape-rendering="crispEdges"/></svg></body></html>
